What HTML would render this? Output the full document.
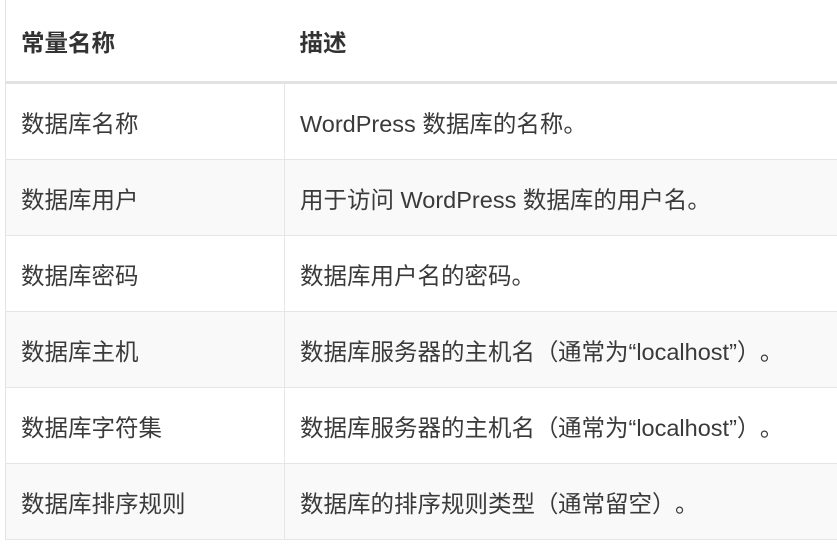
<!DOCTYPE html>
<html><head><meta charset="utf-8"><style>
body{margin:0;background:#fff;width:837px;height:552px;overflow:hidden;font-family:"Liberation Sans","Noto Sans CJK SC",sans-serif;color:#3a3a3a;}
table{position:absolute;left:5px;top:0;border-collapse:collapse;width:840px;border-left:1px solid #e2e2e2;}
td,th{font-size:23.5px;text-align:left;padding:0 0 0 15px;height:75px;border-bottom:1px solid #e6e6e6;}
th{font-weight:bold;height:81px;border-bottom:3px solid #e2e2e2;color:#333;}
td:first-child,th:first-child{width:263px;border-right:1px solid #e6e6e6;}
th:first-child{border-right:none}
tr:nth-child(odd) td{background:#f9f9f9}
.c{font-family:"Noto Sans CJK SC",sans-serif;display:inline-block;width:23px;text-align:center}
</style></head><body>
<table>
<tr><th>常量名称</th><th>描述</th></tr>
<tr><td>数据库名称</td><td>WordPress 数据库的名称。</td></tr>
<tr><td>数据库用户</td><td>用于访问 WordPress 数据库的用户名。</td></tr>
<tr><td>数据库密码</td><td>数据库用户名的密码。</td></tr>
<tr><td>数据库主机</td><td>数据库服务器的主机名<span class="c">（</span>通常为“localhost”<span class="c">）</span>。</td></tr>
<tr><td>数据库字符集</td><td>数据库服务器的主机名<span class="c">（</span>通常为“localhost”<span class="c">）</span>。</td></tr>
<tr><td>数据库排序规则</td><td>数据库的排序规则类型<span class="c">（</span>通常留空<span class="c">）</span>。</td></tr>
</table>
</body></html>
